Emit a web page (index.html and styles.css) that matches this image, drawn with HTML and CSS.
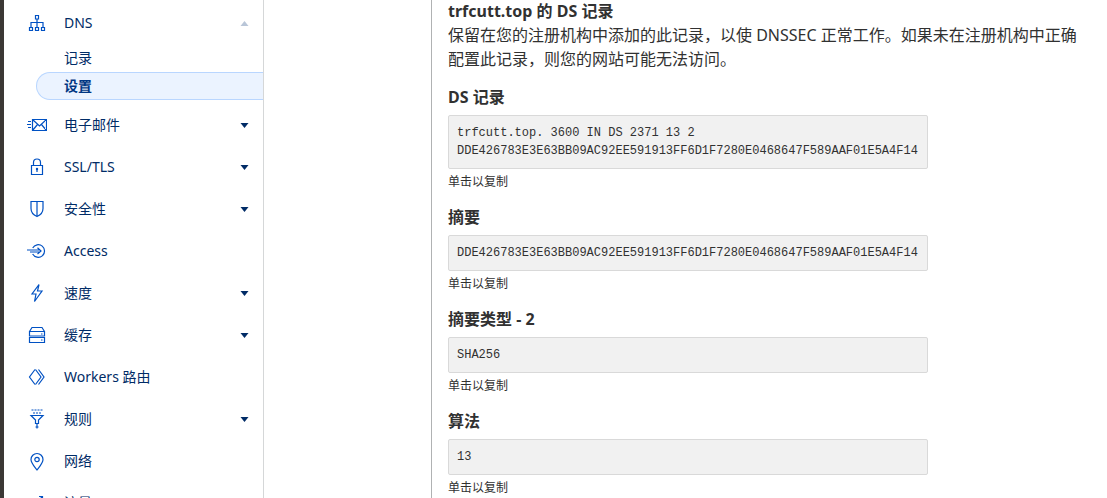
FILE: index.html
```html
<!DOCTYPE html>
<html lang="zh-CN">
  <head>
    <meta charset="UTF-8" />
    <meta name="viewport" content="width=device-width, initial-scale=1.0" />
    <title>DNS 设置</title>
    <link rel="stylesheet" href="styles.css">
  </head>
  <body>
    <nav class="sidebar">
      <button class="nav-item" type="button" aria-expanded="true">
        <svg class="icon" viewBox="0 0 20 20"><path d="M8.5 2.5h3V6h-3zM2.5 14.5h3v3h-3zM8.5 14.5h3v3h-3zM14.5 14.5h3v3h-3zM10 6v8.5M4 14.5v-5h12v5" /></svg>
        <span class="label">DNS</span>
        <svg class="caret caret-open" viewBox="0 0 8 5"><path d="M0 5L4 0l4 5z" /></svg>
      </button>
      <div class="sub-nav">
        <a class="sub-item" href="#">记录</a>
        <a class="sub-item active" href="#">设置</a>
      </div>
      <button class="nav-item" type="button">
        <svg class="icon" viewBox="0 0 20 20"><path d="M5.5 4.5h14v11h-14zM5.5 4.5l7 6.5 7-6.5M5.500 15.500l5-6M19.500 15.500l-5-6M1 6.500h3M0 9.500h4M1 12.500h3" /></svg>
        <span class="label">电子邮件</span>
        <svg class="caret" viewBox="0 0 8 5"><path d="M0 0h8L4 5z" /></svg>
      </button>
      <button class="nav-item" type="button">
        <svg class="icon" viewBox="0 0 20 20"><path d="M4.500 8.500h11v9h-11zM6.500 8.500v-3a3.500 3.500 0 0 1 7 0v3M10 12v3" /><circle cx="10" cy="12" r=".6" /></svg>
        <span class="label">SSL/TLS</span>
        <svg class="caret" viewBox="0 0 8 5"><path d="M0 0h8L4 5z" /></svg>
      </button>
      <button class="nav-item" type="button">
        <svg class="icon" viewBox="0 0 20 20"><path d="M4 2.500h12v7c0 4-2.500 6.500-6 8-3.500-1.500-6-4-6-8zM10 2.500v15" /></svg>
        <span class="label">安全性</span>
        <svg class="caret" viewBox="0 0 8 5"><path d="M0 0h8L4 5z" /></svg>
      </button>
      <a class="nav-item" href="#">
        <svg class="icon" viewBox="0 0 20 20"><path d="M5.700 7a6.300 6.300 0 1 1 0 6M0 9h13M3 11h10M10.500 6.800l3.500 3.200-3.500 3" /></svg>
        <span class="label">Access</span>
      </a>
      <button class="nav-item" type="button">
        <svg class="icon" viewBox="0 0 20 20"><path d="M12 1.500l-7 9.500h4l-1.500 7.500 7.500-10.500h-4.500z" /></svg>
        <span class="label">速度</span>
        <svg class="caret" viewBox="0 0 8 5"><path d="M0 0h8L4 5z" /></svg>
      </button>
      <button class="nav-item" type="button">
        <svg class="icon" viewBox="0 0 20 20"><path d="M2.500 6.500l2.500-4h10l2.500 4M2.500 6.500h15v4.500h-15zM2.500 12.500h15v5h-15zM14 9h1.500M14 15h1.500" /></svg>
        <span class="label">缓存</span>
        <svg class="caret" viewBox="0 0 8 5"><path d="M0 0h8L4 5z" /></svg>
      </button>
      <a class="nav-item" href="#">
        <svg class="icon" viewBox="0 0 20 20"><path d="M8 17.500L2.500 10 8 2.500M8.500 2.500L14 10l-5.500 7.500M11.500 2.500L17 10l-5.500 7.500" /></svg>
        <span class="label">Workers 路由</span>
      </a>
      <button class="nav-item" type="button">
        <svg class="icon" viewBox="0 0 20 20"><path stroke-dasharray="2 1" d="M4.500 1h11M6 4h8" /><path d="M4 6.500h12L11.500 11v3.500h-3V11zM10 14.500V17M10 17v2.500M8.500 18h3" /></svg>
        <span class="label">规则</span>
        <svg class="caret" viewBox="0 0 8 5"><path d="M0 0h8L4 5z" /></svg>
      </button>
      <a class="nav-item" href="#">
        <svg class="icon" viewBox="0 0 20 20"><path d="M10 19c-3-4-6-7-6-10.500a6 6 0 0 1 12 0c0 3.500-3 6.500-6 10.500z" /><circle cx="10" cy="8.500" r="2.200" /></svg>
        <span class="label">网络</span>
      </a>
      <a class="nav-item" href="#">
        <svg class="icon" viewBox="0 0 20 20"><path d="M12 3.500h3.500V7M15.500 3.500L10 9v9M4.500 6l5.500 6" /></svg>
        <span class="label">流量</span>
      </a>
    </nav>

    <main class="page">
      <div class="panel">
        <header class="intro">
          <h2>trfcutt.top 的 DS 记录</h2>
          <p>保留在您的注册机构中添加的此记录，以使 DNSSEC 正常工作。如果未在注册机构中正确配置此记录，则您的网站可能无法访问。</p>
        </header>

        <section class="record">
          <h3>DS 记录</h3>
          <pre>trfcutt.top. 3600 IN DS 2371 13 2 DDE426783E3E63BB09AC92EE591913FF6D1F7280E0468647F589AAF01E5A4F14</pre>
          <button class="copy" type="button">单击以复制</button>
        </section>
        <section class="record">
          <h3>摘要</h3>
          <pre>DDE426783E3E63BB09AC92EE591913FF6D1F7280E0468647F589AAF01E5A4F14</pre>
          <button class="copy" type="button">单击以复制</button>
        </section>
        <section class="record">
          <h3>摘要类型 - 2</h3>
          <pre>SHA256</pre>
          <button class="copy" type="button">单击以复制</button>
        </section>
        <section class="record">
          <h3>算法</h3>
          <pre>13</pre>
          <button class="copy" type="button">单击以复制</button>
        </section>
      </div>
    </main>
  </body>
</html>
```

FILE: styles.css
```css
* {
  box-sizing: border-box;
}

body {
  display: flex;
  height: 100vh;
  margin: 0;
  overflow: hidden;
  border-left: 4px solid #3b3835;
  background: #fff;
  color: #313131;
  font-family: "Noto Sans", "Noto Sans CJK SC", sans-serif;
  font-size: 16px;
  line-height: 24px;
}

h2,
h3,
p,
pre {
  margin: 0;
}

h2,
h3 {
  font-size: 16px;
  font-weight: 700;
}

button {
  border: 0;
  background: none;
  font-family: inherit;
  text-align: left;
  cursor: pointer;
}

/* sidebar */
.sidebar {
  display: flex;
  flex-direction: column;
  flex: 0 0 260px;
  padding-top: 2px;
  border-right: 1px solid #d5d7d8;
}

.nav-item {
  display: flex;
  flex: none;
  align-items: center;
  gap: 17px;
  height: 42px;
  padding: 0 14px 0 23px;
  color: #002b66;
  font-size: 14px;
  line-height: 20px;
  text-decoration: none;
}

.label {
  flex: 1;
}

.icon {
  width: 20px;
  height: 20px;
  fill: none;
  stroke: #0051c3;
  stroke-width: 1.2;
}

.caret {
  width: 9px;
  height: 5px;
  fill: #002b66;
}

.caret-open {
  fill: #b9c6d8;
}

.sub-nav {
  display: flex;
  flex-direction: column;
  margin-bottom: 4px;
  padding-left: 32px;
}

.sub-item {
  height: 28px;
  padding-left: 27px;
  border: 1px solid transparent;
  border-right: 0;
  border-radius: 14px 0 0 14px;
  color: #002b66;
  font-size: 14px;
  line-height: 26px;
  text-decoration: none;
}

.sub-item.active {
  border-color: #b9d6ff;
  background: #ebf3ff;
  color: #003682;
  font-weight: 700;
}

/* content */
.page {
  flex: 1;
  min-width: 0;
  padding-left: 167px;
}

.panel {
  height: 100%;
  padding: 0 16px;
  overflow: hidden;
  border-left: 1px solid #b0b2b3;
}

.intro {
  margin-top: -1px;
}

.record {
  padding-top: 14px;
}

.record pre {
  max-width: 480px;
  margin: 6px 0 3px;
  padding: 8px;
  border: 1px solid #d9d9d9;
  border-radius: 2px;
  background: #f1f1f1;
  font-family: "Liberation Mono", monospace;
  font-size: 12px;
  line-height: 18px;
  white-space: pre-wrap;
  overflow-wrap: break-word;
}

.copy {
  display: block;
  padding: 0;
  color: #313131;
  font-size: 12px;
  line-height: 19px;
}
```
